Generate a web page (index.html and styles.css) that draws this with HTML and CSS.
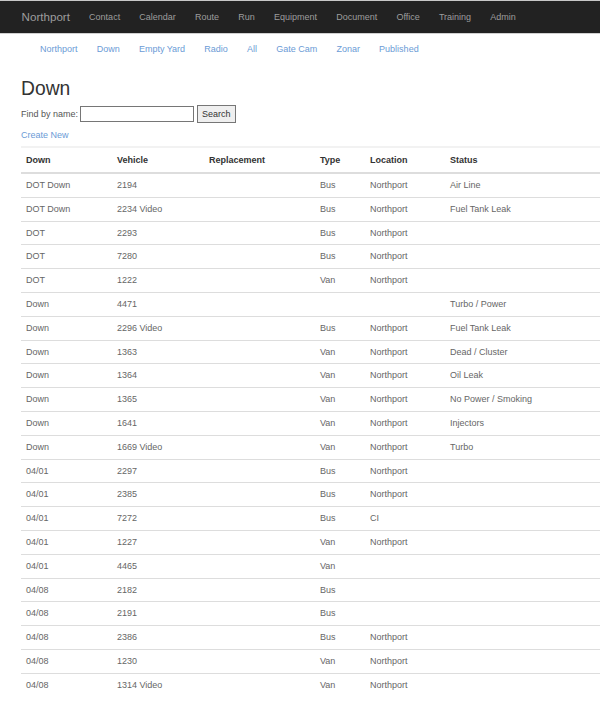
FILE: index.html
```html
<!DOCTYPE html>
<html>
<head>
<meta charset="utf-8">
<title>Down</title>
<link rel="stylesheet" href="styles.css">
</head>
<body>
<nav class="topbar">
  <a class="brand" href="#">Northport</a>
  <ul class="topnav">
    <li><a href="#">Contact</a></li>
    <li><a href="#">Calendar</a></li>
    <li><a href="#">Route</a></li>
    <li><a href="#">Run</a></li>
    <li><a href="#">Equipment</a></li>
    <li><a href="#">Document</a></li>
    <li><a href="#">Office</a></li>
    <li><a href="#">Training</a></li>
    <li><a href="#">Admin</a></li>
  </ul>
</nav>
<ul class="subnav">
  <li><a href="#">Northport</a></li>
  <li><a href="#">Down</a></li>
  <li><a href="#">Empty Yard</a></li>
  <li><a href="#">Radio</a></li>
  <li><a href="#">All</a></li>
  <li><a href="#">Gate Cam</a></li>
  <li><a href="#">Zonar</a></li>
  <li><a href="#">Published</a></li>
</ul>
<main class="content">
  <h2 class="title">Down</h2>
  <form class="find">
    <label>Find by name:</label>
    <input type="text" class="find-input">
    <button type="button" class="find-btn">Search</button>
  </form>
  <a class="create" href="#">Create New</a>
  <table class="grid">
    <thead>
      <tr><th class="c1">Down</th><th class="c2">Vehicle</th><th class="c3">Replacement</th><th class="c4">Type</th><th class="c5">Location</th><th>Status</th></tr>
    </thead>
    <tbody>
      <tr><td>DOT Down</td><td>2194</td><td></td><td>Bus</td><td>Northport</td><td>Air Line</td></tr>
      <tr><td>DOT Down</td><td>2234 Video</td><td></td><td>Bus</td><td>Northport</td><td>Fuel Tank Leak</td></tr>
      <tr><td>DOT</td><td>2293</td><td></td><td>Bus</td><td>Northport</td><td></td></tr>
      <tr><td>DOT</td><td>7280</td><td></td><td>Bus</td><td>Northport</td><td></td></tr>
      <tr><td>DOT</td><td>1222</td><td></td><td>Van</td><td>Northport</td><td></td></tr>
      <tr><td>Down</td><td>4471</td><td></td><td></td><td></td><td>Turbo / Power</td></tr>
      <tr><td>Down</td><td>2296 Video</td><td></td><td>Bus</td><td>Northport</td><td>Fuel Tank Leak</td></tr>
      <tr><td>Down</td><td>1363</td><td></td><td>Van</td><td>Northport</td><td>Dead / Cluster</td></tr>
      <tr><td>Down</td><td>1364</td><td></td><td>Van</td><td>Northport</td><td>Oil Leak</td></tr>
      <tr><td>Down</td><td>1365</td><td></td><td>Van</td><td>Northport</td><td>No Power / Smoking</td></tr>
      <tr><td>Down</td><td>1641</td><td></td><td>Van</td><td>Northport</td><td>Injectors</td></tr>
      <tr><td>Down</td><td>1669 Video</td><td></td><td>Van</td><td>Northport</td><td>Turbo</td></tr>
      <tr><td>04/01</td><td>2297</td><td></td><td>Bus</td><td>Northport</td><td></td></tr>
      <tr><td>04/01</td><td>2385</td><td></td><td>Bus</td><td>Northport</td><td></td></tr>
      <tr><td>04/01</td><td>7272</td><td></td><td>Bus</td><td>CI</td><td></td></tr>
      <tr><td>04/01</td><td>1227</td><td></td><td>Van</td><td>Northport</td><td></td></tr>
      <tr><td>04/01</td><td>4465</td><td></td><td>Van</td><td></td><td></td></tr>
      <tr><td>04/08</td><td>2182</td><td></td><td>Bus</td><td></td><td></td></tr>
      <tr><td>04/08</td><td>2191</td><td></td><td>Bus</td><td></td><td></td></tr>
      <tr><td>04/08</td><td>2386</td><td></td><td>Bus</td><td>Northport</td><td></td></tr>
      <tr><td>04/08</td><td>1230</td><td></td><td>Van</td><td>Northport</td><td></td></tr>
      <tr><td>04/08</td><td>1314 Video</td><td></td><td>Van</td><td>Northport</td><td></td></tr>
    </tbody>
  </table>
</main>
</body>
</html>
```

FILE: styles.css
```css
html, body {
  margin: 0;
  padding: 0;
  background: #fff;
  overflow-x: hidden;
}
body {
  font-family: "Liberation Sans", Arial, sans-serif;
  font-size: 9px;
  line-height: 1.42857;
  color: #333;
}
a { text-decoration: none; }

.topbar {
  display: flex;
  align-items: center;
  height: 32px;
  background: #222;
  border-top: 1px solid #c8c8c8;
  border-bottom: 1px solid #d0d0d0;
  padding-left: 11px;
}
.brand {
  color: #9d9d9d;
  font-size: 11.6px;
  padding: 0 9.6px 0 10.6px;
  line-height: 32px;
}
.topnav {
  display: flex;
  list-style: none;
  margin: 0;
  padding: 0;
}
.topnav a {
  display: block;
  color: #9d9d9d;
  padding: 0 9.6px;
  line-height: 32px;
}

.subnav {
  display: flex;
  list-style: none;
  margin: 0;
  padding: 4px 0 0 40px;
  height: 22px;
  align-items: center;
}
.subnav li { margin-right: 19.2px; }
.subnav a { color: #6b9bd6; }

.content {
  padding-left: 21px;
}
.title {
  font-size: 19.3px;
  font-weight: 500;
  line-height: 1.1;
  margin: 18px 0 5px;
  color: #333;
}
.find {
  display: flex;
  align-items: center;
  margin: 0;
  height: 20px;
}
.find label { color: #555; margin-right: 2px; }
.find-input {
  width: 110px;
  height: 12px;
  border: 1px solid #767676;
  padding: 1px;
  margin: 0 3px 0 0;
  font-size: 9px;
}
.find-btn {
  font-family: "Liberation Sans", Arial, sans-serif;
  font-size: 9px;
  height: 18px;
  padding: 0 4px;
  background: #efefef;
  border: 1px solid #767676;
  color: #333;
  margin: 0;
}
.create {
  display: block;
  color: #6b9bd6;
  margin: 5px 0 4px;
  line-height: 13px;
}

.grid {
  width: 579px;
  border-collapse: collapse;
  border-top: 2px solid #f2f2f2;
}
.grid th, .grid td {
  text-align: left;
  padding: 5px 5px;
  line-height: 12.8px;
  vertical-align: top;
}
.grid th {
  font-weight: bold;
  color: #333;
  padding-top: 6px;
  border-bottom: 2px solid #ddd;
}
.grid td {
  color: #666;
  border-top: 1px solid #ddd;
}
.grid tbody tr:first-child td { border-top: 0; }
.c1 { width: 81px; }
.c2 { width: 82px; }
.c3 { width: 101px; }
.c4 { width: 40px; }
.c5 { width: 70px; }
```
